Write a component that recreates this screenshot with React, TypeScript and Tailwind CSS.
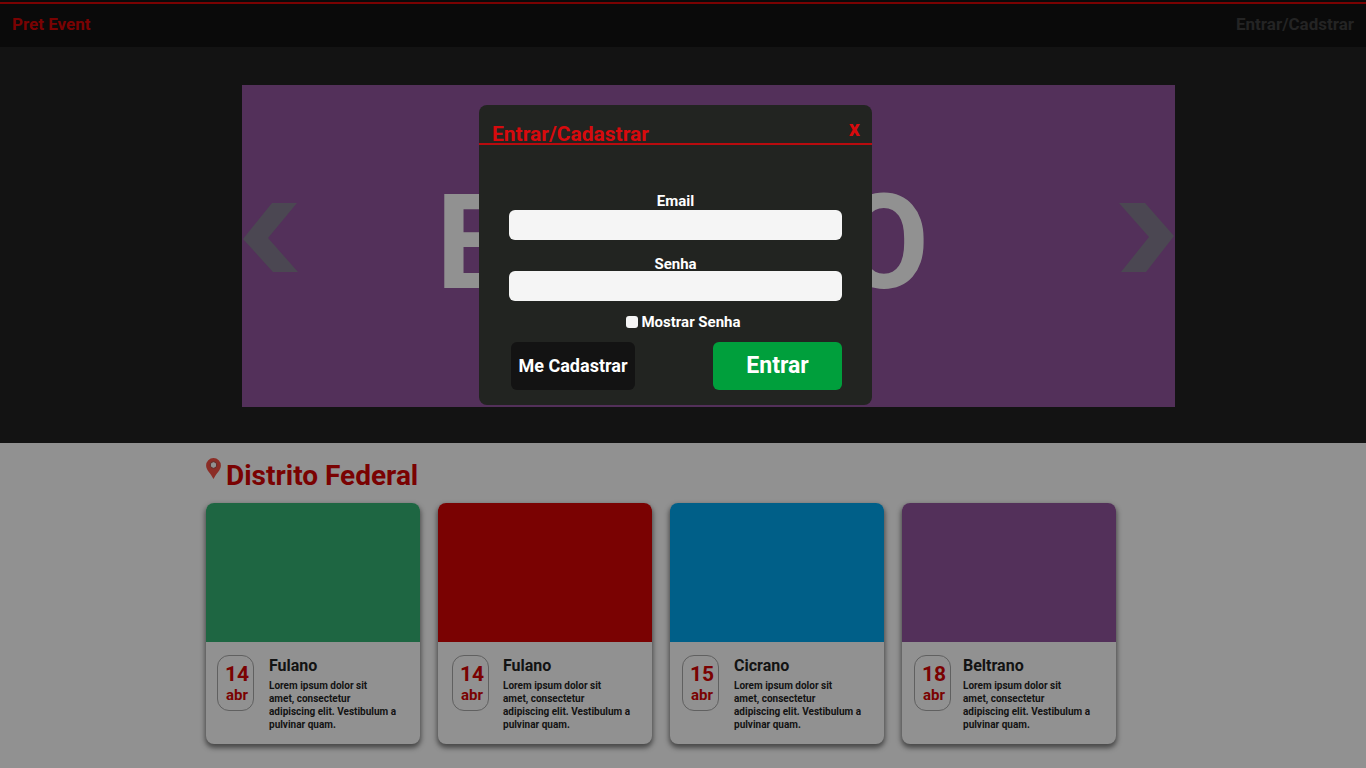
import { useState } from "react";

type EventCard = {
  name: string;
  day: string;
  month: string;
  cover: string;
  text: string;
  dateInset: string;
};

const DESCRIPTION = ["Lorem ipsum dolor sit", "amet, consectetur", "adipiscing elit. Vestibulum a", "pulvinar quam."];

const EVENTS: EventCard[] = [
  { name: "Fulano", day: "14", month: "abr", cover: "bg-[#1e6642]", dateInset: "pl-[11px]", text: "pl-[15px]" },
  { name: "Fulano", day: "14", month: "abr", cover: "bg-[#7a0202]", dateInset: "pl-[14px]", text: "pl-[14px]" },
  { name: "Cicrano", day: "15", month: "abr", cover: "bg-[#005f88]", dateInset: "pl-[12px]", text: "pl-[15px]" },
  { name: "Beltrano", day: "18", month: "abr", cover: "bg-[#53305a]", dateInset: "pl-[12px]", text: "pl-[12px]" },
];

function Header() {
  return (
    <header className="bg-[#0a0a0a] pt-[2px]">
      <div className="flex h-[45px] items-center justify-between border-t-2 border-[#7a0202] px-3 pb-1 font-bold">
        <a href="#" className="text-[17px] leading-5 text-[#7a0202]">
          Pret Event
        </a>
        <a href="#entrar" className="text-[17px] leading-5 text-[#242424]">
          Entrar/Cadstrar
        </a>
      </div>
    </header>
  );
}

function Banner() {
  return (
    <section className="bg-[#131313] pt-[38px] pr-[191px] pb-9 pl-[242px]">
      <div className="flex h-[322px] items-center justify-between overflow-hidden bg-[#53305a]">
        <button type="button" aria-label="Anterior" className="shrink-0 pb-4">
          <svg width="56" height="70" viewBox="0 0 56 70" fill="#4b4752">
            <path d="M30 0h25L26 35l30 34H31L1 36z" />
          </svg>
        </button>
        <p className="pr-[52px] pb-1.5 text-[131px] leading-none font-bold text-[#919191]">EVENTO</p>
        <button type="button" aria-label="Próximo" className="shrink-0 pb-4">
          <svg width="56" height="70" viewBox="0 0 56 70" fill="#4b4752">
            <path d="M0 0h26l29 33-28 36H2l28-35z" />
          </svg>
        </button>
      </div>
    </section>
  );
}

function Card({ event }: { event: EventCard }) {
  return (
    <article className="w-[214px] overflow-hidden rounded-lg bg-[#919191] shadow-[0_3px_5px_1px_rgba(0,0,0,0.5)]">
      <div className={`h-[139px] ${event.cover}`} />
      <div className={`flex h-[102px] items-start pt-[13px] ${event.dateInset}`}>
        <div className="flex h-14 w-[37px] shrink-0 flex-col items-center rounded-xl border border-[#606060] pt-2 pl-[3px] font-bold text-[#7a0202]">
          <span className="text-[21px] leading-5">{event.day}</span>
          <span className="text-[15px] leading-[22px]">{event.month}</span>
        </div>
        <div className={`font-bold text-[#131313] ${event.text}`}>
          <h3 className="text-base leading-[22px]">{event.name}</h3>
          <p className="pt-[2px] text-[10px] leading-[13px] whitespace-nowrap">
            {DESCRIPTION.map((line) => (
              <span key={line} className="block">
                {line}
              </span>
            ))}
          </p>
        </div>
      </div>
    </article>
  );
}

function LoginDialog() {
  const [showPassword, setShowPassword] = useState(false);
  return (
    <div className="absolute inset-0 flex items-start justify-center pt-[105px] pr-[15px]">
      <div role="dialog" aria-labelledby="login-title" className="w-[393px] rounded-lg bg-[#222421] pb-[15px] font-bold text-white">
        <div className="flex h-10 items-end justify-between border-b-2 border-[#b90b0e] pr-3 pl-[13px] text-[#d80a0d]">
          <h2 id="login-title" className="text-[21px] leading-[18px]">
            Entrar/Cadastrar
          </h2>
          <button type="button" aria-label="Fechar" className="pb-1 text-[22px] leading-5">
            x
          </button>
        </div>
        <form className="flex flex-col px-[30px] pt-12" onSubmit={(e) => e.preventDefault()}>
          <label htmlFor="email" className="text-center text-[15px] leading-4">
            Email
          </label>
          <input id="email" type="email" className="mt-px h-[30px] rounded-md bg-[#f5f5f5] px-2 text-sm text-black" />
          <label htmlFor="senha" className="mt-4 text-center text-[15px] leading-4">
            Senha
          </label>
          <input
            id="senha"
            type={showPassword ? "text" : "password"}
            className="-mt-px h-[30px] rounded-md bg-[#f5f5f5] px-2 text-sm text-black"
          />
          <div className="mt-[11px] flex items-center justify-center gap-[3px] pl-4">
            <input
              id="mostrar"
              type="checkbox"
              checked={showPassword}
              onChange={(e) => setShowPassword(e.target.checked)}
              className="size-3 appearance-none rounded-[3px] bg-[#f5f5f5] checked:bg-[#009f3c]"
            />
            <label htmlFor="mostrar" className="text-[15px] leading-5">
              Mostrar Senha
            </label>
          </div>
          <div className="mt-[10px] flex justify-between pl-[2px]">
            <button type="button" className="h-12 w-[124px] rounded-md bg-[#131313] text-lg leading-5">
              Me Cadastrar
            </button>
            <button type="submit" className="h-12 w-[129px] rounded-md bg-[#009f3c] text-[23px] leading-6">
              Entrar
            </button>
          </div>
        </form>
      </div>
    </div>
  );
}

export default function App() {
  return (
    <div className="relative min-h-screen bg-[#919191] font-[Roboto,Arial,sans-serif]">
      <Header />
      <main>
        <Banner />
        <section className="pt-[15px] pb-6 pl-[206px]">
          <h2 className="flex items-start gap-[5px] text-[#7a0202]">
            <svg width="15" height="21" viewBox="0 0 15 21" aria-hidden="true">
              <path d="M7.5 0A7.4 7.4 0 0 0 .1 7.4C.1 12 5 15.5 7.5 21c2.5-5.5 7.4-9 7.4-13.6A7.4 7.4 0 0 0 7.5 0z" fill="#8b2d26" />
              <circle cx="7.5" cy="7" r="3.3" fill="#919191" stroke="#5f2926" />
            </svg>
            <span className="pt-1 text-[28px] leading-7 font-bold">Distrito Federal</span>
          </h2>
          <div className="mt-[13px] flex flex-wrap gap-[18px]">
            {EVENTS.map((event, index) => (
              <Card key={index} event={event} />
            ))}
          </div>
        </section>
      </main>
      <LoginDialog />
    </div>
  );
}
